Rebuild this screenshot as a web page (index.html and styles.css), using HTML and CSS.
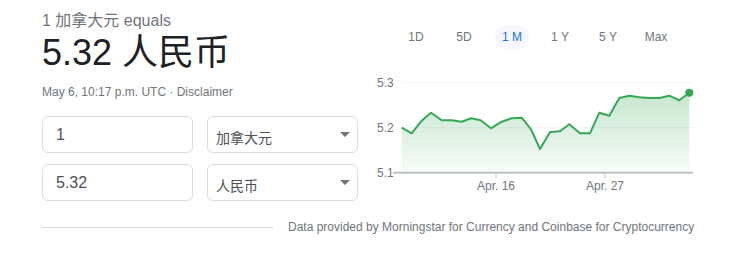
FILE: index.html
```html
<!DOCTYPE html>
<html>
<head>
<meta charset="utf-8">
<link rel="stylesheet" href="styles.css">
</head>
<body>
<div class="card">
  <div class="main">
    <div class="left">
      <div class="equals">1 加拿大元 equals</div>
      <div class="result">5.32 人民币</div>
      <div class="meta">May 6, 10:17 p.m. UTC · Disclaimer</div>
      <div class="row">
        <div class="field input">1</div>
        <div class="field select"><span class="sel-text">加拿大元</span><span class="arrow"></span></div>
      </div>
      <div class="row">
        <div class="field input">5.32</div>
        <div class="field select"><span class="sel-text">人民币</span><span class="arrow"></span></div>
      </div>
    </div>
    <div class="right">
      <div class="tabs">
        <div class="tab"><span>1D</span></div>
        <div class="tab"><span>5D</span></div>
        <div class="tab active"><span>1 M</span></div>
        <div class="tab"><span>1 Y</span></div>
        <div class="tab"><span>5 Y</span></div>
        <div class="tab"><span>Max</span></div>
      </div>
      <svg class="chart" width="340" height="130" viewBox="0 0 340 130">
        <defs>
          <linearGradient id="fillg" x1="0" y1="0" x2="0" y2="1">
            <stop offset="0" stop-color="#34a853" stop-opacity="0.28"/>
            <stop offset="1" stop-color="#34a853" stop-opacity="0.04"/>
          </linearGradient>
        </defs>
        <line x1="42" y1="12.7" x2="333" y2="12.7" stroke="#f1f3f4" stroke-width="1"/>
        <line x1="42" y1="57.7" x2="333" y2="57.7" stroke="#f1f3f4" stroke-width="1"/>
        <path fill="url(#fillg)" d="M41.7,57.7 L51.7,63.3 L61.7,50.7 L71,42.7 L81.7,50.3 L91.7,50.3 L101.7,51.7 L111,48.3 L120.7,50.3 L131,58.3 L141.7,51.7 L151.7,48.3 L161.7,47.7 L171,59.3 L180,79 L190,62 L200,61.3 L209.3,54.3 L220,63.3 L230,63.3 L239.3,42.7 L249.3,45.7 L259.3,28 L269.3,25.7 L279.3,27.3 L289.3,28 L299.3,28 L309.3,25.7 L319.3,30.3 L329.3,22.7 L329.3,102.7 L41.7,102.7 Z"/>
        <polyline fill="none" stroke="#34a853" stroke-width="2" stroke-linejoin="round" points="41.7,57.7 51.7,63.3 61.7,50.7 71,42.7 81.7,50.3 91.7,50.3 101.7,51.7 111,48.3 120.7,50.3 131,58.3 141.7,51.7 151.7,48.3 161.7,47.7 171,59.3 180,79 190,62 200,61.3 209.3,54.3 220,63.3 230,63.3 239.3,42.7 249.3,45.7 259.3,28 269.3,25.7 279.3,27.3 289.3,28 299.3,28 309.3,25.7 319.3,30.3 329.3,22.7"/>
        <circle cx="329.3" cy="22.7" r="4" fill="#34a853"/>
        <line x1="33" y1="102.7" x2="333" y2="102.7" stroke="#bdc1c6" stroke-width="2"/>
        <line x1="136" y1="103" x2="136" y2="108" stroke="#bdc1c6" stroke-width="1"/>
        <line x1="245" y1="103" x2="245" y2="108" stroke="#bdc1c6" stroke-width="1"/>
        <text class="axis" x="17" y="17">5.3</text>
        <text class="axis" x="17" y="61.5">5.2</text>
        <text class="axis" x="17" y="106.5">5.1</text>
        <text class="axis" x="136" y="119.5" text-anchor="middle">Apr. 16</text>
        <text class="axis" x="245" y="119.5" text-anchor="middle">Apr. 27</text>
      </svg>
    </div>
  </div>
  <div class="footer">
    <div class="rule"></div>
    <div class="source">Data provided by Morningstar for Currency and Coinbase for Cryptocurrency</div>
  </div>
</div>
</body>
</html>
```

FILE: styles.css
```css
html, body {
  margin: 0;
  padding: 0;
  background: #fff;
}
body {
  font-family: Arial, "Liberation Sans", "Noto Sans CJK SC", sans-serif;
  color: #202124;
}
.card {
  padding-left: 42px;
}
.main {
  display: flex;
}
.left {
  width: 318px;
  padding-top: 11px;
}
.equals {
  font-size: 16px;
  line-height: 20px;
  color: #70757a;
}
.result {
  font-size: 36px;
  line-height: 44px;
  color: #202124;
}
.meta {
  margin-top: 9px;
  font-size: 12px;
  line-height: 16px;
  color: #70757a;
}
.row {
  display: flex;
  gap: 14px;
}
.meta + .row {
  margin-top: 16px;
}
.row + .row {
  margin-top: 11px;
}
.field {
  box-sizing: border-box;
  width: 151px;
  height: 37px;
  border: 1px solid #dadce0;
  border-radius: 6px;
  display: flex;
  align-items: center;
}
.input {
  padding-left: 13px;
  font-size: 16px;
  color: #4d5156;
}
.select {
  padding-left: 8px;
  padding-right: 7px;
  justify-content: space-between;
  font-size: 14px;
  color: #4d5156;
}
.sel-text {
  padding-top: 5px;
}
.arrow {
  width: 0;
  height: 0;
  border-left: 5px solid transparent;
  border-right: 5px solid transparent;
  border-top: 5px solid #70757a;
}
.right {
  width: 340px;
}
.tabs {
  display: flex;
  padding-left: 32px;
  margin-top: 25px;
}
.tab {
  width: 48px;
  display: flex;
  justify-content: center;
}
.tab span {
  display: inline-block;
  height: 24px;
  line-height: 24px;
  padding: 0 7px;
  border-radius: 12px;
  font-size: 12px;
  color: #70757a;
}
.tab.active span {
  background: #f5f7fc;
  color: #1a73e8;
}
.chart {
  display: block;
  margin-top: 21px;
}
.axis {
  font-family: Arial, "Liberation Sans", sans-serif;
  font-size: 12px;
  fill: #70757a;
}
.footer {
  display: flex;
  align-items: center;
  gap: 15px;
  margin-top: 18px;
}
.rule {
  width: 231px;
  height: 1px;
  background: #dadce0;
}
.source {
  font-size: 12px;
  line-height: 16px;
  color: #70757a;
}
```
